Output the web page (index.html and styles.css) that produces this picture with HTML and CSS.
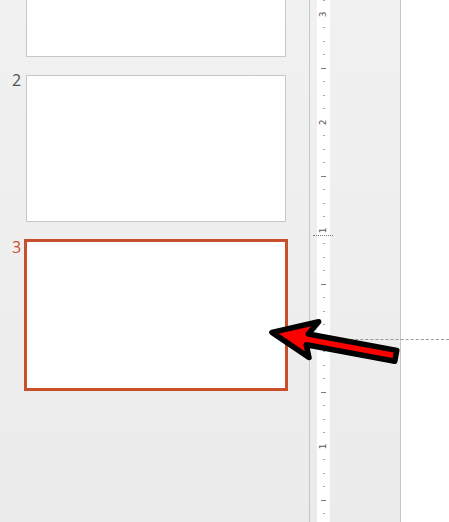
FILE: index.html
```html
<!DOCTYPE html>
<html lang="en">
<head>
  <meta charset="UTF-8">
  <title>Slides</title>
  <link rel="stylesheet" href="styles.css">
</head>
<body>
  <div class="app">
    <aside class="thumbs">
      <div class="slide-row first">
        <span class="num"></span>
        <div class="slide"></div>
      </div>
      <div class="slide-row">
        <span class="num">2</span>
        <div class="slide"></div>
      </div>
      <div class="slide-row active">
        <span class="num">3</span>
        <div class="slide"></div>
      </div>
    </aside>

    <div class="gutter"></div>

    <div class="ruler">
      <div class="tick"><i></i></div>
      <div class="tick label"><b>3</b></div>
      <div class="tick"><i></i></div>
      <div class="tick"><i></i></div>
      <div class="tick"><i></i></div>
      <div class="tick half"><i></i></div>
      <div class="tick"><i></i></div>
      <div class="tick"><i></i></div>
      <div class="tick"><i></i></div>
      <div class="tick label"><b>2</b></div>
      <div class="tick"><i></i></div>
      <div class="tick"><i></i></div>
      <div class="tick"><i></i></div>
      <div class="tick half"><i></i></div>
      <div class="tick"><i></i></div>
      <div class="tick"><i></i></div>
      <div class="tick"><i></i></div>
      <div class="tick label margin"><b>1</b></div>
      <div class="tick"><i></i></div>
      <div class="tick"><i></i></div>
      <div class="tick"><i></i></div>
      <div class="tick half"><i></i></div>
      <div class="tick"><i></i></div>
      <div class="tick"><i></i></div>
      <div class="tick"><i></i></div>
      <div class="tick"></div>
      <div class="tick"><i></i></div>
      <div class="tick"><i></i></div>
      <div class="tick"><i></i></div>
      <div class="tick half"><i></i></div>
      <div class="tick"><i></i></div>
      <div class="tick"><i></i></div>
      <div class="tick"><i></i></div>
      <div class="tick label"><b>1</b></div>
      <div class="tick"><i></i></div>
      <div class="tick"><i></i></div>
      <div class="tick"><i></i></div>
      <div class="tick half"><i></i></div>
      <div class="tick"><i></i></div>
    </div>

    <div class="workspace"></div>
    <div class="canvas"></div>

    <div class="guide"></div>

    <svg class="arrow" width="449" height="522" viewBox="0 0 449 522">
      <g transform="translate(270 332) rotate(10.5)">
        <path d="M2 0 L46 -19 L38 -5 L128 -5 L128 6 L38 6 L43 18 Z"
              fill="#ff0000" stroke="#000" stroke-width="5.5" stroke-linejoin="round"/>
      </g>
    </svg>
  </div>
</body>
</html>
```

FILE: styles.css
```css
html, body {
  margin: 0;
  height: 100%;
  overflow: hidden;
}

body {
  font-family: "Open Sans", "Noto Sans", sans-serif;
  background: linear-gradient(#f1f1f1, #ebebeb);
}

.app {
  position: relative;
  display: flex;
  height: 522px;
}

/* Slide thumbnails */
.thumbs {
  width: 309px;
  border-right: 1px solid #c6c6c6;
  display: flex;
  flex-direction: column;
  gap: 18px;
}

.slide-row {
  display: flex;
  align-items: flex-start;
}

.slide-row.first {
  margin-top: -90px;
}

.num {
  width: 26px;
  flex: none;
  padding-left: 12px;
  box-sizing: border-box;
  font-size: 16px;
  line-height: 16px;
  margin-top: -3px;
  color: #505050;
}

.slide {
  width: 258px;
  height: 145px;
  background: #fff;
  border: 1px solid #c6c6c6;
}

.slide-row.active {
  margin-top: -1px;
}

.slide-row.active .num {
  color: #c9502d;
  margin-top: 0;
}

.slide-row.active .slide {
  width: 258px;
  height: 146px;
  margin-left: -2px;
  border: 3px solid #c84f2b;
}

/* Vertical ruler */
.gutter {
  width: 7px;
}

.ruler {
  width: 13px;
  background: #fff;
  display: flex;
  flex-direction: column;
}

.tick {
  flex: 0 0 13.5px;
  display: flex;
  align-items: center;
  justify-content: center;
  position: relative;
}

.tick:first-child {
  margin-top: -6.25px;
}

.tick i {
  width: 2px;
  height: 1px;
  background: #a8a8a8;
}

.tick.half i {
  width: 5px;
  background: #7a7a7a;
}

.tick b {
  font-family: "DejaVu Sans", sans-serif;
  font-weight: normal;
  font-size: 9px;
  line-height: 9px;
  color: #555;
  transform: rotate(-90deg);
}

.tick.margin::after {
  content: "";
  position: absolute;
  left: -4px;
  top: 12px;
  width: 20px;
  border-top: 1px dotted #777;
}

.workspace {
  width: 70px;
  border-right: 1px solid #c6c6c6;
}

.canvas {
  flex: 1;
  background: #fff;
}

/* Overlays */
.guide {
  position: absolute;
  left: 330px;
  right: 0;
  top: 339px;
  height: 0;
  border-top: 1px dashed #9a9a9a;
}

.arrow {
  position: absolute;
  left: 0;
  top: 0;
  pointer-events: none;
}
```
